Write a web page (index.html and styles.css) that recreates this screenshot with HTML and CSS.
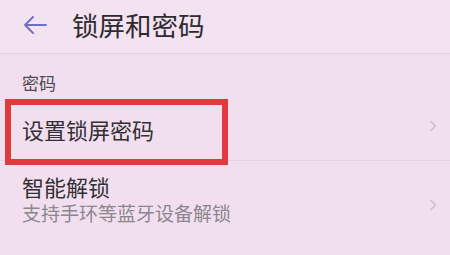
FILE: index.html
```html
<!DOCTYPE html>
<html lang="zh-CN">
<head>
<meta charset="utf-8">
<link rel="stylesheet" href="styles.css">
</head>
<body>
<div class="screen">
  <header class="header">
    <svg class="back" width="24" height="18" viewBox="0 0 24 18"><path d="M23 9H2M10 1L2 9l8 8" fill="none" stroke="#6d6fc4" stroke-width="1.8" stroke-linecap="round" stroke-linejoin="round"/></svg>
    <h1 class="title">锁屏和密码</h1>
  </header>
  <div class="section">密码</div>
  <div class="item item-first">
    <div class="item-text"><div class="item-title">设置锁屏密码</div></div>
    <svg class="chev" width="8" height="12" viewBox="0 0 8 12"><path d="M1.5 1l5 5-5 5" fill="none" stroke="#cbbfca" stroke-width="1.5"/></svg>
  </div>
  <div class="item item-second">
    <div class="item-text">
      <div class="item-title">智能解锁</div>
      <div class="item-sub">支持手环等蓝牙设备解锁</div>
    </div>
    <svg class="chev" width="8" height="12" viewBox="0 0 8 12"><path d="M1.5 1l5 5-5 5" fill="none" stroke="#cbbfca" stroke-width="1.5"/></svg>
  </div>
  <div class="highlight"></div>
</div>
</body>
</html>
```

FILE: styles.css
```css
html, body {
  margin: 0;
  padding: 0;
}
body {
  background: #f1dff0;
  font-family: "Noto Sans CJK SC", "Noto Sans", sans-serif;
}
.screen {
  position: relative;
  width: 450px;
  height: 255px;
  overflow: hidden;
  background: #f1dff0;
}
.header {
  height: 53px;
  display: flex;
  align-items: center;
  padding-left: 23px;
  border-bottom: 1px solid #e4d0e2;
  background: #f3e3f1;
}
.back {
  display: block;
  margin-top: -4px;
}
.title {
  margin: -4px 0 0 25px;
  font-size: 26.5px;
  font-weight: 400;
  color: #2e2b2e;
  line-height: 30px;
}
.section {
  height: 44px;
  box-sizing: border-box;
  padding: 19px 0 0 22px;
  font-size: 17px;
  line-height: 20px;
  color: #4f4a4f;
}
.item {
  display: flex;
  align-items: center;
  justify-content: space-between;
  padding: 0 13px 0 22px;
}
.item-first {
  height: 62px;
  border-bottom: 1px solid #e6d4e4;
}
.item-second {
  padding-top: 12px;
  align-items: flex-start;
}
.item-second .chev {
  margin-top: 26px;
}
.item-title {
  font-size: 22px;
  line-height: 26px;
  color: #333033;
}
.item-sub {
  margin-top: 3px;
  font-size: 19px;
  line-height: 22px;
  color: #8c878c;
}
.chev {
  display: block;
}
.item-first .chev {
  margin-top: -6px;
}
.highlight {
  position: absolute;
  left: 5px;
  top: 99px;
  width: 223px;
  height: 66px;
  box-sizing: border-box;
  border: 6px solid #e2393d;
}
```
